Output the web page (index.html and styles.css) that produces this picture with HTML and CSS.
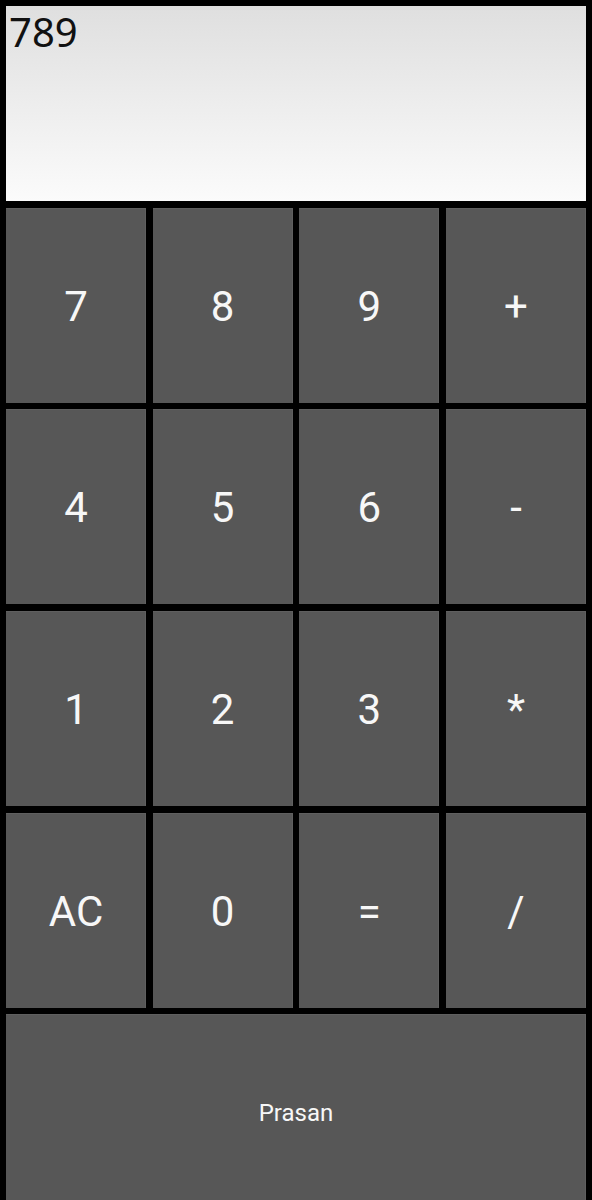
FILE: index.html
```html
<!DOCTYPE html>
<html>
<head>
<meta charset="utf-8">
<link rel="stylesheet" href="styles.css">
</head>
<body>
<div class="calc">
  <div class="display">789</div>
  <div class="keys">
    <div class="key">7</div>
    <div class="key">8</div>
    <div class="key">9</div>
    <div class="key">+</div>
    <div class="key">4</div>
    <div class="key">5</div>
    <div class="key">6</div>
    <div class="key">-</div>
    <div class="key">1</div>
    <div class="key">2</div>
    <div class="key">3</div>
    <div class="key">*</div>
    <div class="key">AC</div>
    <div class="key">0</div>
    <div class="key">=</div>
    <div class="key">/</div>
    <div class="key wide">Prasan</div>
  </div>
</div>
</body>
</html>
```
FILE: styles.css
```css
html, body {
  margin: 0;
  padding: 0;
  background: #000;
  height: 1200px;
  overflow: hidden;
}
.calc {
  padding: 6px;
  display: flex;
  flex-direction: column;
  gap: 6.67px;
}
.display {
  height: 195px;
  box-sizing: border-box;
  background: linear-gradient(to bottom, #dfdfdf, #fbfbfb);
  font-family: "Noto Sans", sans-serif;
  font-size: 40px;
  line-height: 1;
  color: #111;
  padding: 6px 0 0 3px;
}
.keys {
  display: grid;
  grid-template-columns: repeat(4, 1fr);
  grid-auto-rows: 195px;
  gap: 6.67px;
}
.key {
  background: #575757;
  color: #f7f7f7;
  font-family: Roboto, sans-serif;
  font-size: 42px;
  padding-top: 2px;
  display: flex;
  align-items: center;
  justify-content: center;
  box-shadow: inset -1px 1px 0 #5f5f5f;
}
.wide {
  grid-column: 1 / -1;
  font-size: 24px;
}
```
